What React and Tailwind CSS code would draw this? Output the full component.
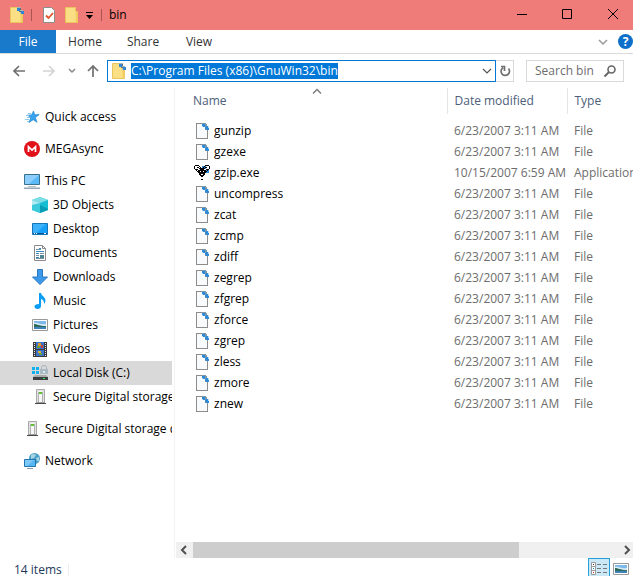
import React from "react";

const files = [
  { name: "gunzip" },
  { name: "gzexe" },
  { name: "gzip.exe", date: "10/15/2007 6:59 AM", type: "Application" },
  { name: "uncompress" },
  { name: "zcat" },
  { name: "zcmp" },
  { name: "zdiff" },
  { name: "zegrep" },
  { name: "zfgrep" },
  { name: "zforce" },
  { name: "zgrep" },
  { name: "zless" },
  { name: "zmore" },
  { name: "znew" },
];

function Icon({ children, className = "size-4" }) {
  return (
    <svg viewBox="0 0 16 16" className={`${className} shrink-0`} fill="none" aria-hidden="true">
      {children}
    </svg>
  );
}

function FolderIcon({ marked }) {
  return (
    <Icon>
      <path d="M1.5.5h10v4h2v11h-12z" fill="#fbdf85" stroke="#e9c45f" />
      <path d="M11.5 15V6l2-1.5V15z" fill="#f4cd62" />
      {marked && (
        <>
          <path d="M8 0h4v3h2v4h-2l-2-3H8z" fill="#a9b8b0" />
          <path d="M8 1h3v3H8zM12 4h3v3h-3z" fill="#2f86d2" />
          <path d="M11 1h1v2h-1zM10 4h2v1h-2z" fill="#5c6f7a" />
        </>
      )}
    </Icon>
  );
}

function FileIcon() {
  return (
    <Icon>
      <path d="M2 0h7v1h2v3h2v3h1v9H2z" fill="#8c8c8c" />
      <path d="M3 1h5v3h3v3h2v8H3z" fill="#f8fafb" />
      <path d="M8 0h4v1h1v3h-2V3H8z" fill="#7f98a8" />
      <path d="M8 1h3v3H9V3H8zM12 3h2v2h1v2h-3V6h-1V4h1z" fill="#2d8ad8" />
      <path d="M14 3h1v2h-1zM8 3h1v1H8z" fill="#b9daf3" />
    </Icon>
  );
}

function GzipIcon() {
  return (
    <Icon>
      <path d="M8 1h4v3H8zM12 5h3v3h-3z" fill="#2d8ad8" />
      <g stroke="#000" shapeRendering="crispEdges">
        <path d="M1 .5h4M11 .5h4M.5 1v3M15.5 1v3M1 4.5h3M12 4.5h3M5 1.5h1M10 1.5h1M3 2.5h2M11 2.5h2M6 2.5h1M9 2.5h1" />
        <path d="M5 3.5h6M4 5.5h8M3 6.5h3M7 6.5h2M10 6.5h3M4 7.5h8M5 8.5h6M5 9.5h2M9 9.5h2M6 10.5h4M7 11.5h2M7 14.5h2" />
        <path d="M2 5.5h1M13 5.5h1M6 4.5h4" />
      </g>
    </Icon>
  );
}

function StarIcon() {
  return (
    <Icon>
      <path d="M9.500 2l1.200 3.800 4.500-.2-3.800 2.900 1.600 4.800-3.800-2.600L5 13.500l1.800-4.800-3.200-2.500 4-.3z" fill="#36a4ee" stroke="#2585cd" strokeWidth=".7" />
      <path d="M4 4.500h3M2 6.500h3M3 8.500h3M1 10.500h4M3 12.500h2" stroke="#8ccbf3" />
    </Icon>
  );
}

function MegaIcon() {
  return (
    <Icon>
      <circle cx="8" cy="8" r="8" fill="#e0111b" />
      <path d="M4.500 11V5.700L8 9l3.500-3.300V11" stroke="#fff" strokeWidth="1.700" />
    </Icon>
  );
}

function PcIcon() {
  return (
    <Icon>
      <path d="M.5 1.500h15v10H.5z" fill="#5bb9f7" stroke="#39718f" />
      <path d="M1 2h14L5 11H1z" fill="#8bcefb" />
      <path d="M4 13.500h8" stroke="#b4c3cb" />
      <path d="M0 15.200h16" stroke="#8298a5" strokeWidth="1.300" />
    </Icon>
  );
}

function CubeIcon() {
  return (
    <Icon>
      <path d="M8 0l8 3v10l-8 3-8-3V3z" fill="#17bdd2" />
      <path d="M8 0l8 3-8 3-8-3z" fill="#7edde7" />
      <path d="M0 3l8 3v10l-8-3z" fill="#b4eaf0" />
      <path d="M0 8l8-2v10l-8-3z" fill="#3acadb" />
      <path d="M8 8l8 4v1l-8 3z" fill="#079db6" />
    </Icon>
  );
}

function DesktopIcon() {
  return (
    <Icon>
      <path d="M.5 2.500h15v11H.5z" fill="#17a0f7" stroke="#1675b8" />
      <path d="M1 3h13L4 12H1z" fill="#3db2fb" />
      <path d="M1 12.500h14" stroke="#0a5795" />
      <path d="M2 12.500h1M4 12.500h1M12 12.500h2" stroke="#fff" />
    </Icon>
  );
}

function DocumentIcon() {
  return (
    <Icon>
      <path d="M2.500.5h8l3 3v12h-11z" fill="#fff" stroke="#8a8a8a" />
      <path d="M10.500.5v3h3" stroke="#8a8a8a" />
      <path d="M7 3.500h2M4 6.500h8M4 8.500h3M4 12.500h3" stroke="#3589c3" />
      <path d="M4 4.500h5M8 8.500h4M4 10.500h3M4 13.500h8" stroke="#78909d" />
      <path d="M8 10h4v3H8z" fill="#4e8595" />
    </Icon>
  );
}

function DownloadIcon() {
  return (
    <Icon>
      <path d="M5.500.5h5V8h5L8 15.500.5 8h5z" fill="#3c98e8" stroke="#2779c3" />
    </Icon>
  );
}

function MusicIcon() {
  return (
    <Icon>
      <path d="M7 0h2c.5 3 4.500 4 4.500 7.500 0 2-1 3-1.500 3.500.5-3-1.500-4.500-3-5V13c0 2-1.500 3-3.500 3S2.500 15 2.500 13.500 4 11 7 11z" fill="#0b9df5" />
    </Icon>
  );
}

function PictureIcon() {
  return (
    <Icon>
      <path d="M.5 2.500h15v11H.5z" fill="#fff" stroke="#999" />
      <path d="M2 4h12v8H2z" fill="#7fb9ea" />
      <path d="M2 6c4-1 5 2 12 1v2H2z" fill="#d8ecf8" />
      <path d="M2 7c3 0 5 2 12 2v1H2z" fill="#2d6a59" />
      <path d="M2 10h12v2H2z" fill="#3f83ba" />
    </Icon>
  );
}

function VideoIcon() {
  return (
    <Icon>
      <path d="M1 1h14v15H1z" fill="#3b3b3b" />
      <path d="M4 1h8v7H4zM4 9h8v6H4z" fill="#3a73c9" />
      <path d="M2.500 2v14M13.500 2v14" stroke="#e9e9e9" strokeDasharray="1 1" />
      <path d="M6 2h3v3H6z" fill="#d9952f" />
      <path d="M9 4h2v3H9z" fill="#c93d35" />
      <path d="M5 5h3v2H5zM7 12h3v2H7z" fill="#65a13f" />
      <path d="M6 10h3v2H6z" fill="#e2b13c" />
    </Icon>
  );
}

function DiskIcon() {
  return (
    <Icon>
      <path d="M0 2h3v3H0zM4 2h3v3H4zM0 6h3v3H0zM4 6h3v3H4z" fill="#12b0ec" />
      <path d="M8 4h8v5H8z" fill="#a9bac2" />
      <path d="M11 6h2v2h-2z" fill="#dfe6e9" />
      <path d="M9.500 4V2.500Q9.500.5 12 .5t2.500 2V4" stroke="#a5b2b8" />
      <path d="M3 10h11l2 2H1z" fill="#a9a9a9" />
      <path d="M1 12h15v3H1z" fill="#3c4043" />
      <path d="M11 13.500h2" stroke="#3fe05c" />
    </Icon>
  );
}

function SdIcon() {
  return (
    <Icon>
      <path d="M4.500.5h8v13h-8z" fill="#e4e4e4" stroke="#a8a8a8" />
      <path d="M6.500 3v10M10.500 3v10" stroke="#b0b0b0" />
      <path d="M7 2h3v11H7z" fill="#f7f7f7" />
      <path d="M7 3h3v2H7z" fill="#62c12f" />
      <path d="M4 13.500h9" stroke="#9b9b9b" />
      <path d="M3 14.500h11" stroke="#4a4a4a" />
    </Icon>
  );
}

function NetworkIcon() {
  return (
    <Icon>
      <circle cx="10.500" cy="5.500" r="5.500" fill="#4b9fc6" />
      <path d="M7 2q3-2 5 0l-2 3-3 1zM12 5l3-1v4h-2z" fill="#a5d4e4" />
      <path d="M.5 6.500h11v7H.5z" fill="#56b6f4" stroke="#2276ad" />
      <path d="M1 7h9l-7 6H1z" fill="#7dcafa" />
      <path d="M3 15.500h6" stroke="#8a9ba5" />
    </Icon>
  );
}

const places = [
  [{ label: "Quick access", icon: StarIcon }],
  [{ label: "MEGAsync", icon: MegaIcon }],
  [
    { label: "This PC", icon: PcIcon },
    { label: "3D Objects", icon: CubeIcon, child: true },
    { label: "Desktop", icon: DesktopIcon, child: true },
    { label: "Documents", icon: DocumentIcon, child: true },
    { label: "Downloads", icon: DownloadIcon, child: true },
    { label: "Music", icon: MusicIcon, child: true },
    { label: "Pictures", icon: PictureIcon, child: true },
    { label: "Videos", icon: VideoIcon, child: true },
    { label: "Local Disk (C:)", icon: DiskIcon, child: true, active: true },
    { label: "Secure Digital storage de", icon: SdIcon, child: true },
  ],
  [{ label: "Secure Digital storage de", icon: SdIcon }],
  [{ label: "Network", icon: NetworkIcon }],
];

function TitleBar() {
  return (
    <header className="flex h-[30px] shrink-0 items-center overflow-hidden bg-[#f07c79] pl-[9px]">
      <FolderIcon marked />
      <span className="ml-[6px] h-3 w-px bg-[#a85654]" />
      <button aria-label="Properties" className="ml-[9px]">
        <Icon>
          <path d="M2.500.5h8l3 3v12h-11z" fill="#fff" stroke="#8d8d8d" />
          <path d="M5 8.500l2.500 2.500L12 6" stroke="#e0532a" strokeWidth="1.800" />
        </Icon>
      </button>
      <button aria-label="New folder" className="ml-[7px]">
        <FolderIcon />
      </button>
      <button aria-label="Customize Quick Access Toolbar" className="ml-[2px]">
        <Icon>
          <path d="M4 5.500h7" stroke="#000" />
          <path d="M4 8h7l-3.500 4z" fill="#000" />
        </Icon>
      </button>
      <span className="ml-[3px] h-3 w-px bg-[#a85654]" />
      <h1 className="ml-[7px] flex-1">bin</h1>
      <div className="-mr-[3px] flex">
        <button aria-label="Minimize" className="flex h-[30px] w-[46px] items-center justify-center">
          <Icon><path d="M4 7.500h10" stroke="#000" /></Icon>
        </button>
        <button aria-label="Maximize" className="flex h-[30px] w-[46px] items-center justify-center">
          <Icon><path d="M3.500 2.500h9v9h-9z" stroke="#000" /></Icon>
        </button>
        <button aria-label="Close" className="flex h-[30px] w-[46px] items-center justify-center">
          <Icon><path d="M3 2l10 10M13 2L3 12" stroke="#000" /></Icon>
        </button>
      </div>
    </header>
  );
}

function Ribbon() {
  return (
    <div className="flex h-6 shrink-0 items-stretch border-b border-[#dadbdc] text-[#333]">
      <button className="w-14 bg-[#1979ca] text-white">File</button>
      <button className="w-[58px]">Home</button>
      <button className="w-[58px]">Share</button>
      <button className="w-[54px]">View</button>
      <div className="ml-auto flex items-center gap-[7px]">
        <button aria-label="Expand the Ribbon">
          <Icon><path d="M4 6l4 4 4-4" stroke="#999" strokeWidth="1.500" /></Icon>
        </button>
        <button aria-label="Help" className="size-[15px] rounded-full bg-[#0d6fc9] text-xs leading-[15px] font-bold text-white">
          ?
        </button>
      </div>
    </div>
  );
}

function AddressBar() {
  return (
    <div className="flex h-[34px] shrink-0 items-center pr-[9px]">
      <div className="flex w-[107px] shrink-0 items-center pl-[11px]">
        <button aria-label="Back">
          <Icon><path d="M14 8H3M8 3L3 8l5 5" stroke="#707070" strokeWidth="1.700" /></Icon>
        </button>
        <button aria-label="Forward" className="ml-[14px]">
          <Icon><path d="M2 8h11M8 3l5 5-5 5" stroke="#d4d4d4" strokeWidth="1.700" /></Icon>
        </button>
        <button aria-label="Recent locations" className="ml-[7px]">
          <Icon><path d="M5 6l3 3 3-3" stroke="#888" strokeWidth="1.500" /></Icon>
        </button>
        <button aria-label="Up" className="ml-[5px]">
          <Icon><path d="M8 14V3M3 8l5-5 5 5" stroke="#707070" strokeWidth="1.700" /></Icon>
        </button>
      </div>
      <div className="flex h-[22px] min-w-0 flex-1 items-center border border-[#0078d7] pl-[3px]">
        <FolderIcon marked />
        <input
          aria-label="Address"
          className="ml-1 field-sizing-content h-4 bg-[#0078d7] text-white outline-none"
          defaultValue="C:\Program Files (x86)\GnuWin32\bin"
        />
        <button aria-label="Previous locations" className="ml-auto">
          <Icon><path d="M4 6l4 4 4-4" stroke="#555" strokeWidth="1.200" /></Icon>
        </button>
      </div>
      <button aria-label="Refresh" className="flex h-[22px] w-[18px] items-center justify-center border border-l-0 border-[#d9d9d9]">
        <Icon>
          <path d="M11.500 5.500a4.200 4.200 0 1 1-5.500-.8M4 3.500h3.500V8" stroke="#707070" strokeWidth="1.700" />
        </Icon>
      </button>
      <div className="ml-3 flex h-[22px] w-[98px] shrink-0 items-center border border-[#d9d9d9] pr-[5px] pl-2">
        <input
          type="text"
          aria-label="Search bin"
          placeholder="Search bin"
          className="min-w-0 flex-1 outline-none placeholder:text-[#6d6d6d]"
        />
        <Icon>
          <circle cx="9.500" cy="6.500" r="3.500" stroke="#666" strokeWidth="1.600" />
          <path d="M7 9l-4.500 4.500" stroke="#666" strokeWidth="2" />
        </Icon>
      </div>
    </div>
  );
}

function Sidebar() {
  return (
    <nav className="flex w-[175px] shrink-0 flex-col gap-2 overflow-hidden border-r border-[#f3f3f3] pt-[17px] pr-[2px]">
      {places.map((group, i) => (
        <ul key={i}>
          {group.map(({ label, icon: PlaceIcon, child, active }) => (
            <li key={label}>
              <a
                href="#"
                className={`flex h-6 items-center gap-[5px] overflow-hidden whitespace-nowrap ${
                  child ? "pl-8" : "pl-6"
                } ${active ? "bg-[#d9d9d9]" : ""}`}
              >
                <PlaceIcon />
                {label}
              </a>
            </li>
          ))}
        </ul>
      ))}
    </nav>
  );
}

function FileList() {
  return (
    <div className="min-h-0 flex-1 overflow-hidden pl-3">
      <table className="w-full table-fixed whitespace-nowrap">
        <thead className="text-left text-[#4c607a]">
          <tr className="h-[26px]">
            <th className="relative pl-[6px] font-normal">
              Name
              <Icon className="absolute top-0 left-1/2 size-4 -translate-x-1/2">
                <path d="M4 5.500l4-4 4 4" stroke="#777" strokeWidth="1.300" />
              </Icon>
            </th>
            <th className="w-[120px] border-l border-[#e5e5e5] pl-[7px] font-normal">Date modified</th>
            <th className="w-[66px] border-l border-[#e5e5e5] pl-[7px] font-normal">Type</th>
          </tr>
        </thead>
        <tbody className="text-[#6d6d6d]">
          <tr className="h-[6px]" aria-hidden="true" />
          {files.map(({ name, date = "6/23/2007 3:11 AM", type = "File" }) => (
            <tr key={name} className="h-[21px]">
              <td className="pl-[7px] text-black">
                <span className="flex items-center gap-1">
                  {name === "gzip.exe" ? <GzipIcon /> : <FileIcon />}
                  {name}
                </span>
              </td>
              <td className="pl-[7px]">{date}</td>
              <td className="overflow-hidden pl-[7px]">{type}</td>
            </tr>
          ))}
        </tbody>
      </table>
    </div>
  );
}

function ScrollBar() {
  return (
    <div className="ml-px flex h-4 shrink-0 items-stretch bg-[#f0f0f0]">
      <button aria-label="Scroll left" className="w-[17px]">
        <Icon><path d="M10 4L6 8l4 4" stroke="#505050" strokeWidth="2" /></Icon>
      </button>
      <div className="flex-1">
        <div className="h-full w-[77%] bg-[#cdcdcd]" />
      </div>
      <button aria-label="Scroll right" className="w-[17px]">
        <Icon className="ml-1 size-4"><path d="M5 4l4 4-4 4" stroke="#505050" strokeWidth="2" /></Icon>
      </button>
    </div>
  );
}

function StatusBar() {
  return (
    <footer className="flex h-[18px] shrink-0 items-start overflow-hidden pr-[4px] pl-[14px] text-[#1e395b]">
      <span className="w-[54px] pt-1">14 items</span>
      <span className="mt-[6px] h-3 w-px bg-[#eee]" />
      <button aria-label="Details view" className="ml-auto flex h-[22px] w-[22px] items-center justify-center border border-[#26a0da] bg-[#cbe8f6]">
        <Icon>
          <path d="M.5 1.500h4v4h-4zM.5 5.500h4v4h-4zM.5 9.500h4v4h-4z" fill="#fff" stroke="#999" />
          <path d="M2 3.500h1" stroke="#333" />
          <path d="M2 7.500h1" stroke="#2980d0" />
          <path d="M2 11.500h1" stroke="#c22" />
          <path d="M6 3.500h4M12 3.500h4M6 7.500h4M12 7.500h4M6 11.500h4M12 11.500h4" stroke="#777" />
        </Icon>
      </button>
      <button aria-label="Large icons view" className="ml-[3px] pt-[3px]">
        <PictureIcon />
      </button>
    </footer>
  );
}

export default function App() {
  return (
    <div className="flex h-screen flex-col overflow-hidden bg-white font-['Open_Sans','Noto_Sans',sans-serif] text-xs leading-4 text-black">
      <TitleBar />
      <Ribbon />
      <AddressBar />
      <main className="flex min-h-0 flex-1">
        <Sidebar />
        <section className="flex min-w-0 flex-1 flex-col">
          <FileList />
          <ScrollBar />
        </section>
      </main>
      <StatusBar />
    </div>
  );
}
